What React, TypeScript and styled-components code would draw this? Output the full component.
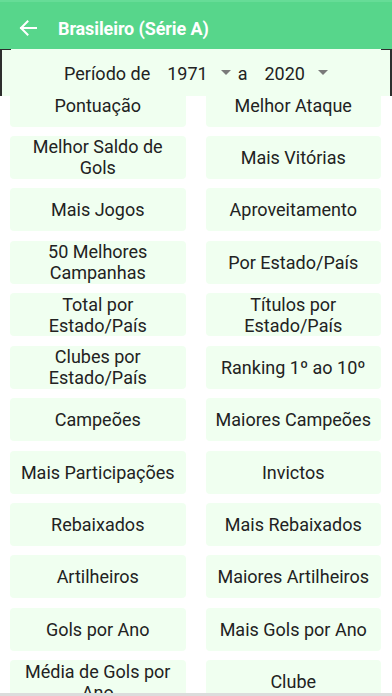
import styled, { createGlobalStyle } from 'styled-components';

const GlobalStyle = createGlobalStyle`
	html, body {
		margin: 0;
		padding: 0;
		background: #ffffff;
	}
	body {
		font-family: Roboto, 'Noto Sans', 'Liberation Sans', sans-serif;
	}
`;

const items = [
	'Pontuação',
	'Melhor Ataque',
	'Melhor Saldo de\nGols',
	'Mais Vitórias',
	'Mais Jogos',
	'Aproveitamento',
	'50 Melhores\nCampanhas',
	'Por Estado/País',
	'Total por\nEstado/País',
	'Títulos por\nEstado/País',
	'Clubes por\nEstado/País',
	'Ranking 1º ao 10º',
	'Campeões',
	'Maiores Campeões',
	'Mais Participações',
	'Invictos',
	'Rebaixados',
	'Mais Rebaixados',
	'Artilheiros',
	'Maiores Artilheiros',
	'Gols por Ano',
	'Mais Gols por Ano',
	'Média de Gols por\nAno',
	'Clube',
];

function BackArrow() {
	return (
		<svg width="18" height="16" viewBox="0 0 18 16" fill="none">
			<path d="M17 8H2M8.5 1.5L2 8l6.5 6.5" stroke="#ffffff" strokeWidth="2" strokeLinecap="square" />
		</svg>
	);
}

function Caret() {
	return (
		<svg width="10" height="6" viewBox="0 0 10 6">
			<path d="M0 0h10L5 5z" fill="#7a7a7a" />
		</svg>
	);
}

export default function App() {
	return (
		<>
			<GlobalStyle />
			<Screen>
				<Header>
					<BackButton>
						<BackArrow />
					</BackButton>
					<Title>Brasileiro (Série A)</Title>
				</Header>
				<Body>
					<PeriodBar>
						<PeriodLabel>Período de</PeriodLabel>
						<Spinner lead="17px" gap="13px">
							<SpinnerValue>1971</SpinnerValue>
							<Caret />
						</Spinner>
						<PeriodLabel lead="7px">a</PeriodLabel>
						<Spinner lead="17px" gap="13px">
							<SpinnerValue>2020</SpinnerValue>
							<Caret />
						</Spinner>
					</PeriodBar>
					<Grid>
						{items.map((label) => (
							<Card key={label}>{label}</Card>
						))}
					</Grid>
				</Body>
				<AdStrip />
			</Screen>
		</>
	);
}

const Screen = styled.div`
	width: 392px;
	height: 696px;
	display: flex;
	flex-direction: column;
	overflow: hidden;
	background: #ffffff;
`;

const Header = styled.div`
	height: 49px;
	flex-shrink: 0;
	box-sizing: border-box;
	padding-top: 5px;
	display: flex;
	align-items: center;
	background: #57d68b;
	border-top: 2px solid #66dc97;
`;

const BackButton = styled.div`
	width: 58px;
	display: flex;
	justify-content: flex-start;
	padding-left: 19px;
	box-sizing: border-box;
`;

const Title = styled.div`
	color: #ffffff;
	font-size: 18px;
	font-weight: 700;
	letter-spacing: -0.1px;
`;

const Body = styled.div`
	flex: 1;
	position: relative;
	overflow: hidden;
`;

const PeriodBar = styled.div`
	position: absolute;
	top: 0;
	left: 0;
	right: 0;
	z-index: 2;
	height: 47px;
	box-sizing: border-box;
	display: flex;
	align-items: center;
	justify-content: center;
	padding: 1px 0 0 0;
	background: #f0fff0;
	border-left: 2px solid #2e2e2e;
	border-right: 2px solid #2e2e2e;

	&::before,
	&::after {
		content: '';
		position: absolute;
		top: 0;
		width: 9px;
		height: 1px;
		background: #2e2e2e;
	}
	&::before {
		left: 0;
	}
	&::after {
		right: 0;
	}
`;

const PeriodLabel = styled.span<{ lead?: string }>`
	color: #222222;
	font-size: 18px;
	margin-left: ${(props) => props.lead ?? '0'};
`;

const Spinner = styled.div<{ lead: string; gap: string }>`
	display: flex;
	align-items: center;
	gap: ${(props) => props.gap};
	margin-left: ${(props) => props.lead};
`;

const SpinnerValue = styled.span`
	color: #222222;
	font-size: 18px;
`;

const Grid = styled.div`
	display: grid;
	grid-template-columns: 1fr 1fr;
	column-gap: 20px;
	row-gap: 9.45px;
	padding: 34.5px 11px 0 10px;
`;

const Card = styled.div`
	height: 43px;
	display: flex;
	align-items: center;
	justify-content: center;
	text-align: center;
	white-space: pre-line;
	background: #f0fff0;
	border-radius: 4px;
	color: #222222;
	font-size: 18px;
	line-height: 21px;
`;

const AdStrip = styled.div`
	height: 3px;
	flex-shrink: 0;
	background: #dcdcdc;
`;
